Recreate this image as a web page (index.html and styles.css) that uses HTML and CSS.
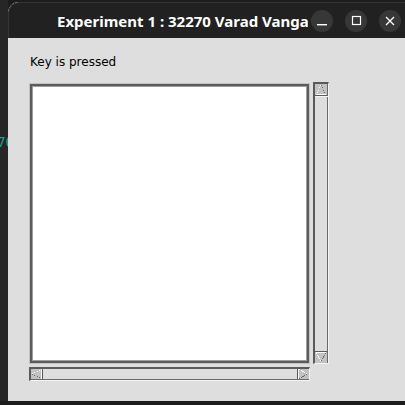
FILE: index.html
```html
<!DOCTYPE html>
<html>
<head>
<meta charset="utf-8">
<link rel="stylesheet" href="styles.css">
</head>
<body>
<div class="desk">
  <div class="term"><span class="term-text">32270</span></div>
  <div class="window">
    <div class="titlebar">
      <span class="title">Experiment 1 : 32270 Varad Vanga</span>
      <div class="controls">
        <span class="ctl"><svg width="22" height="22" viewBox="0 0 22 22"><rect x="6" y="14" width="10" height="1.4" fill="#fff"/></svg></span>
        <span class="ctl"><svg width="22" height="22" viewBox="0 0 22 22"><rect x="7.5" y="6.5" width="8" height="8" fill="none" stroke="#fff" stroke-width="1.2"/></svg></span>
        <span class="ctl"><svg width="22" height="22" viewBox="0 0 22 22"><path d="M7 7 L15 15 M15 7 L7 15" stroke="#fff" stroke-width="1.3"/></svg></span>
      </div>
    </div>
    <div class="content">
      <div class="label">Key is pressed</div>
      <div class="ta-grid">
        <div class="ta"></div>
        <div class="vscroll">
          <div class="btn vbtn up">
            <svg width="12" height="11" viewBox="0 0 12 11" shape-rendering="crispEdges">
              <path d="M6 1 L1.5 10" stroke="#fff" stroke-width="1" stroke-dasharray="1 1"/>
              <path d="M6 1 L10.5 10" stroke="#6a6a6a" stroke-width="1" stroke-dasharray="1 1"/>
              <rect x="1" y="10" width="10" height="1" fill="#fff"/>
            </svg>
          </div>
          <div class="track"></div>
          <div class="btn vbtn down">
            <svg width="12" height="11" viewBox="0 0 12 11" shape-rendering="crispEdges">
              <rect x="1" y="0" width="10" height="1" fill="#fff"/>
              <path d="M1.5 1 L6 10" stroke="#fff" stroke-width="1" stroke-dasharray="1 1"/>
              <path d="M10.5 1 L6 10" stroke="#6a6a6a" stroke-width="1" stroke-dasharray="1 1"/>
            </svg>
          </div>
        </div>
        <div class="hscroll">
          <div class="btn hbtn left">
            <svg width="11" height="10" viewBox="0 0 11 10" shape-rendering="crispEdges">
              <path d="M1 5 L10 0.5" stroke="#fff" stroke-width="1" stroke-dasharray="1 1"/>
              <path d="M1 5 L10 9.5" stroke="#6a6a6a" stroke-width="1" stroke-dasharray="1 1"/>
              <rect x="10" y="0" width="1" height="10" fill="#fff"/>
            </svg>
          </div>
          <div class="htrack"></div>
          <div class="btn hbtn right">
            <svg width="11" height="10" viewBox="0 0 11 10" shape-rendering="crispEdges">
              <rect x="0" y="0" width="1" height="10" fill="#fff"/>
              <path d="M1 0.5 L10 5" stroke="#fff" stroke-width="1" stroke-dasharray="1 1"/>
              <path d="M1 9.5 L10 5" stroke="#6a6a6a" stroke-width="1" stroke-dasharray="1 1"/>
            </svg>
          </div>
        </div>
      </div>
    </div>
  </div>
</div>
</body>
</html>
```

FILE: styles.css
```css
* { box-sizing: border-box; }
html, body {
  margin: 0;
  padding: 0;
  width: 405px;
  height: 405px;
  overflow: hidden;
  background: #1c1c1c;
}
.desk {
  display: flex;
  width: 405px;
  height: 401px;
}
.term {
  width: 8px;
  flex: none;
  background: #262626;
  overflow: hidden;
  display: flex;
  justify-content: flex-end;
  align-items: flex-start;
  padding-top: 134px;
}
.term-text {
  font-family: "DejaVu Sans Mono", monospace;
  font-size: 14px;
  color: #1fa38f;
  white-space: nowrap;
  margin-right: -6px;
}
.window {
  flex: 1;
  margin-top: 2px;
  background: #dedede;
  border-top-left-radius: 11px;
  overflow: hidden;
  display: flex;
  flex-direction: column;
}
.titlebar {
  height: 36px;
  flex: none;
  background: #212121;
  border-top: 1px solid #353535;
  border-left: 1px solid #353535;
  border-top-left-radius: 11px;
  display: flex;
  align-items: center;
  padding-left: 48px;
  padding-right: 4px;
}
.title {
  flex: 1;
  min-width: 0;
  overflow: hidden;
  white-space: nowrap;
  color: #ffffff;
  font-family: "Noto Sans", "DejaVu Sans", sans-serif;
  font-weight: 700;
  font-size: 15px;
  letter-spacing: 0;
  margin-right: 3px;
}
.controls {
  display: flex;
  gap: 12px;
  flex: none;
}
.ctl {
  width: 22px;
  height: 22px;
  border-radius: 50%;
  background: #373737;
  display: flex;
}
.content {
  flex: 1;
  padding-left: 21px;
  padding-top: 17px;
}
.label {
  font-family: "DejaVu Sans", sans-serif;
  font-size: 12px;
  line-height: 15px;
  color: #000;
  padding-left: 1px;
}
.ta-grid {
  margin-top: 12px;
  display: grid;
  grid-template-columns: 281px 16px;
  grid-template-rows: 282px 14px;
  column-gap: 3px;
  row-gap: 3px;
}
.ta {
  margin-top: 1px;
  background: #fff;
  border: 1px solid #c2c2c2;
  box-shadow: inset 0 0 0 2px #5c5c5c, inset 0 0 0 3px #9e9e9e;
}
.vscroll {
  display: flex;
  flex-direction: column;
  border-style: solid;
  border-width: 2px 1px 1px 2px;
  border-color: #5a5a5a #f4f4f4 #f4f4f4 #5a5a5a;
  box-shadow: inset -1px 0 0 #6a6a6a;
  background: #dedede;
}
.btn {
  background: #c2c2c2;
  display: flex;
  flex: none;
}
.vbtn {
  height: 11px;
  width: 12px;
}
.up {
  border-bottom: 1px solid #5a5a5a;
  height: 12px;
}
.down {
  border-top: 1px solid #5a5a5a;
  height: 12px;
}
.track {
  flex: 1;
  border-top: 1px solid #f4f4f4;
}
.hscroll {
  grid-column: 1;
  display: flex;
  border-style: solid;
  border-width: 2px 1px 1px 2px;
  border-color: #5a5a5a #f4f4f4 #f4f4f4 #5a5a5a;
  box-shadow: inset 0 -1px 0 #6a6a6a;
  background: #dedede;
}
.hbtn {
  width: 12px;
  height: 10px;
}
.left { border-right: 1px solid #5a5a5a; }
.right { border-left: 1px solid #5a5a5a; }
.htrack { flex: 1; }
```
